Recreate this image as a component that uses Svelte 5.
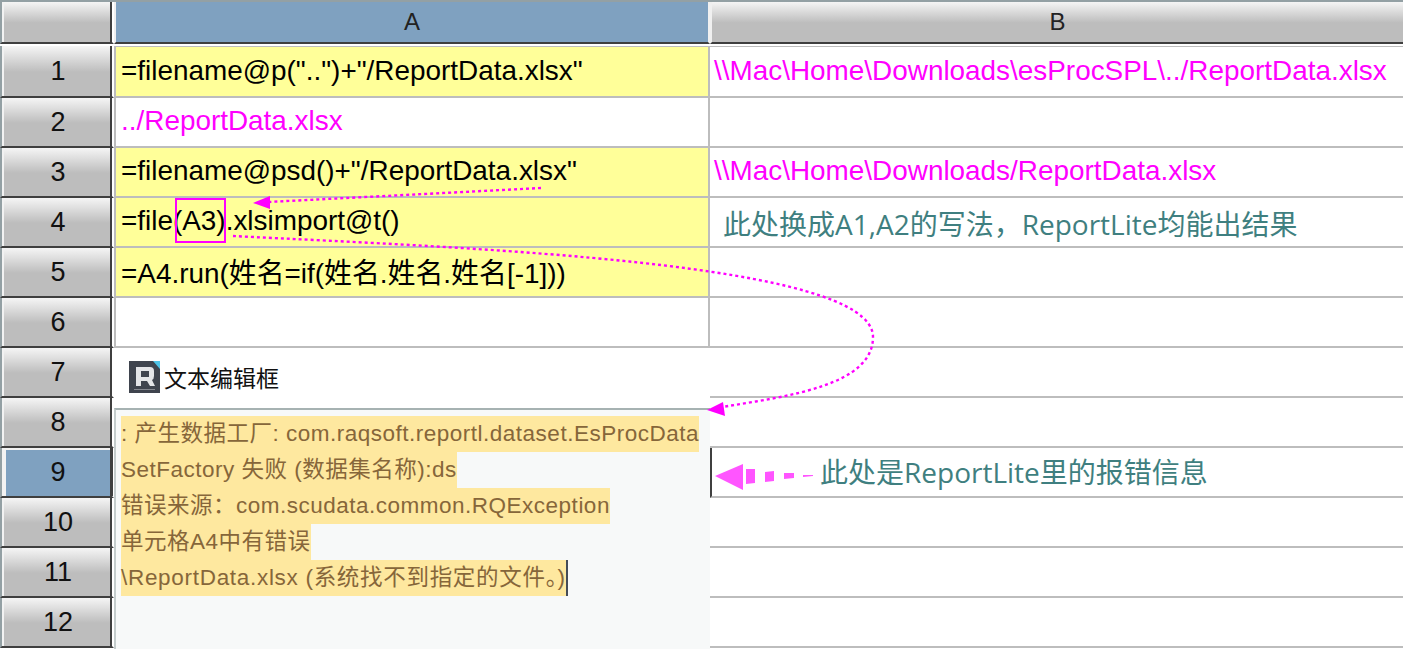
<script lang="ts">
  type Row = { n: number; a?: string; b?: string; formula?: boolean; note?: string };

  const rows: Row[] = [
    { n: 1, a: '=filename@p("..")+"/ReportData.xlsx"', formula: true, b: "\\\\Mac\\Home\\Downloads\\esProcSPL\\../ReportData.xlsx" },
    { n: 2, a: "../ReportData.xlsx" },
    { n: 3, a: '=filename@psd()+"/ReportData.xlsx"', formula: true, b: "\\\\Mac\\Home\\Downloads/ReportData.xlsx" },
    { n: 4, a: "=file(A3).xlsimport@t()", formula: true, note: "此处换成A1,A2的写法，ReportLite均能出结果" },
    { n: 5, a: "=A4.run(姓名=if(姓名.姓名.姓名[-1]))", formula: true },
    { n: 6 },
    { n: 7 },
    { n: 8 },
    { n: 9, note: "此处是ReportLite里的报错信息" },
    { n: 10 },
    { n: 11 },
    { n: 12 },
  ];

  const errorLines = [
    ": 产生数据工厂: com.raqsoft.reportl.dataset.EsProcData",
    "SetFactory 失败 (数据集名称):ds",
    "错误来源：com.scudata.common.RQException",
    "单元格A4中有错误",
    "\\ReportData.xlsx (系统找不到指定的文件。)",
  ];

  const selectedRow = 9;
</script>

<div class="sheet">
  <div class="corner"></div>
  <div class="col-head selected">A</div>
  <div class="col-head">B</div>

  {#each rows as row}
    <div class="row-head" class:selected={row.n === selectedRow} class:first={row.n === 1}>{row.n}</div>
    <div class="cell a" class:formula={row.formula} class:first={row.n === 1}>{row.a ?? ""}</div>
    <div class="cell b" class:first={row.n === 1} class:current={row.n === selectedRow}>
      {#if row.note}
        <span class="note" class:indent={row.n === 4} class:far={row.n === selectedRow}>{row.note}</span>
      {:else}
        {row.b ?? ""}
      {/if}
    </div>
  {/each}

  <div class="popup">
    <div class="popup-title">
      <svg class="logo" viewBox="0 0 31 32" width="31" height="32" aria-hidden="true">
        <rect width="31" height="32" fill="#3f444e" />
        <path d="M24 0h7v8z" fill="#4fc3e6" />
        <path d="M7 6h14q4 0 4 4v5q0 3-2 4l3 6h-5l-3-5h-6v5H7zM12 10v6h8v-6z" fill="#e4e5e8" fill-rule="evenodd" />
        <rect x="5" y="28" width="21" height="1" fill="#858890" />
      </svg>
      <span>文本编辑框</span>
    </div>
    <div class="popup-body">
      {#each errorLines as line, i}
        <div class="line"><span class="mark" class:caret={i === errorLines.length - 1}>{line}</span></div>
      {/each}
    </div>
  </div>

  <div class="ref-box"></div>

  <svg class="arrows" viewBox="0 0 1403 649" width="1403" height="649" aria-hidden="true">
    <path d="M541 188 L268 202" class="dots" />
    <path d="M253 203 L270 196 L270 209 Z" fill="#ff00ff" />
    <path d="M233 236 C 470 248 873 262 873 337 C 873 385 790 396 722 407" class="dots" />
    <path d="M707 410 L723 402 L725 416 Z" fill="#ff00ff" />
    <path d="M715 476 L743 464 L743 490 Z" fill="#ff55ff" />
    <path d="M746 469 L755 469 L755 483 L746 484 Z" fill="#ff55ff" />
    <path d="M765 472 L774 471 L774 481 L765 482 Z" fill="#ff55ff" />
    <path d="M784 473 L794 473 L794 478 L784 479 Z" fill="#ff55ff" />
    <path d="M803 475 L813 475 L813 476 L803 477 Z" fill="#ff55ff" />
  </svg>
</div>

<style>
  :global(body) {
    margin: 0;
    background: white;
    overflow: hidden;
  }

  .sheet {
    position: relative;
    width: 1403px;
    height: 649px;
    overflow: hidden;
    display: grid;
    grid-template-columns: 114px 596px 1fr;
    grid-template-rows: 42px 54px repeat(11, 50px);
    font-family: "Liberation Sans", "Noto Sans CJK SC", sans-serif;
    font-size: 27.9px;
    color: #000;
    box-sizing: border-box;
    border-top: 2px solid #93a0a4;
  }

  .corner,
  .row-head {
    box-sizing: border-box;
    border-left: 2px solid #93a0a4;
    border-right: 2px solid #fff;
    box-shadow: inset 2px 0 #f2f2f2;
    padding-left: 2px;
    background-clip: padding-box;
    background-image: linear-gradient(#f5f5f5, #bdbdbd 52%);
    position: relative;
    display: flex;
    align-items: center;
    justify-content: center;
    border-bottom: 2px solid #3f3f3f;
  }

  .corner::after,
  .row-head::after {
    content: "";
    position: absolute;
    top: 0;
    bottom: 0;
    right: 0;
    width: 2px;
    background: #3f3f3f;
  }

  .row-head {
    font-size: 27px;
    color: #111;
  }

  .row-head.first {
    margin-top: 2px;
  }

  .row-head.selected {
    background-image: none;
    background-color: #7fa1c0;
    box-shadow: inset 4px 2px #f2f2f2;
  }

  .row-head.selected::after {
    right: -1px;
    width: 3px;
  }

  .col-head {
    box-sizing: border-box;
    border-bottom: 2px solid #3f3f3f;
    border-left: 2px solid #f0f0f0;
    background-image: linear-gradient(#f5f5f5, #bdbdbd 52%);
    display: flex;
    align-items: center;
    justify-content: center;
    font-size: 24px;
    color: #222;
  }

  .col-head.selected {
    background-image: none;
    background-color: #7fa1c0;
    border-right: 2px solid #f0f0f0;
  }

  .cell {
    box-sizing: border-box;
    border-bottom: 2px solid #bdbdbd;
    padding-bottom: 2px;
    display: flex;
    align-items: center;
    white-space: nowrap;
    overflow: hidden;
    color: #ff00ff;
  }

  .cell.first {
    margin-top: 2px;
    border-top: 1px solid #bdbdbd;
  }

  .cell.a {
    border-left: 2px solid #bdbdbd;
    border-right: 2px solid #bdbdbd;
    padding-left: 5px;
  }

  .cell.b {
    padding-left: 4px;
  }

  .cell.formula {
    background: #ffff99;
    color: #000;
  }

  .cell.current {
    border-left: 2px solid #3f3f3f;
  }

  .note {
    font-family: "Open Sans", "Noto Sans CJK SC", sans-serif;
    color: #3f7f80;
    font-size: 28px;
    line-height: 1;
  }

  .note.indent {
    margin: 6px 0 0 9px;
  }

  .note.far {
    margin: 2px 0 0 104px;
  }

  .popup {
    position: absolute;
    left: 114px;
    top: 346px;
    width: 596px;
    height: 301px;
    background: white;
    display: flex;
    flex-direction: column;
  }

  .popup-title {
    height: 60px;
    box-sizing: border-box;
    display: flex;
    align-items: center;
    padding: 0 0 2px 15px;
    gap: 4px;
    font-family: "Noto Sans CJK SC", sans-serif;
    font-size: 23px;
    color: #111;
  }

  .popup-body {
    flex: 1;
    background: #f7f9f9;
    border-top: 2px solid #a6b2b2;
    border-left: 2px solid #c4cccc;
    padding: 6px 0 0 5px;
    font-size: 22.5px;
    color: #86663a;
    letter-spacing: 0.5px;
  }

  .line {
    height: 36px;
    line-height: 36px;
    white-space: nowrap;
  }

  .mark {
    display: inline-block;
    height: 36px;
    background: #fee89f;
  }

  .mark.caret {
    border-right: 2px solid #444c58;
    letter-spacing: 0.7px;
  }

  .ref-box {
    position: absolute;
    left: 175px;
    top: 196px;
    width: 51px;
    height: 45px;
    box-sizing: border-box;
    border: 2px solid #ff00ff;
  }

  .arrows {
    position: absolute;
    left: 0;
    top: -2px;
    pointer-events: none;
  }

  .dots {
    fill: none;
    stroke: #ff00ff;
    stroke-width: 2.4;
    stroke-dasharray: 3 3;
  }
</style>
